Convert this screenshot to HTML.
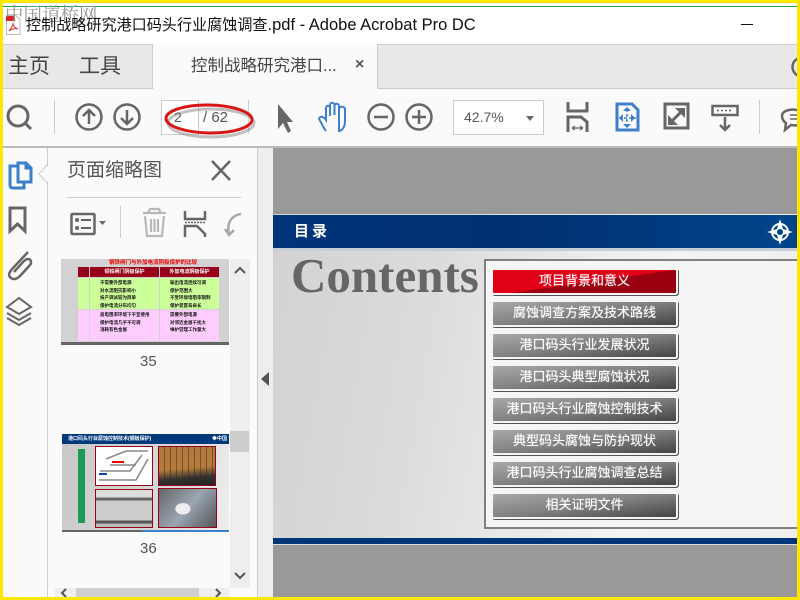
<!DOCTYPE html>
<html><head><meta charset="utf-8"><style>
html,body{margin:0;padding:0;width:800px;height:600px;overflow:hidden;background:#fff}
*{box-sizing:border-box}
body{font-family:"Liberation Sans","Noto Sans CJK SC",sans-serif;position:relative}
.a{position:absolute}
.t{position:absolute;white-space:nowrap;line-height:1}
.btn{position:absolute;left:491px;width:187px;height:27px;border:2px solid #f4f4f4;border-radius:3px;box-shadow:1px 1px 0 #555;background:linear-gradient(172deg,#a8a8a8 0%,#808080 50%,#444 100%);color:#fff;font-size:13px;text-align:center;line-height:22px;text-shadow:0 0 1px rgba(255,255,255,.6)}
.c{font-size:4.500px;line-height:7.700px;padding-left:10px;padding-top:1px;color:#111;font-weight:bold}
</style></head><body>
<div class="a" style="left:3px;top:6px;width:794px;height:1px;background:#1f9d5c"></div>
<svg class="a" style="left:5px;top:15px" width="16" height="20"><path d="M1.500 .5H11L15 4.500V19.500H1.500Z" fill="#fff" stroke="#bbb"/><rect x="1" y="1" width="9" height="5" fill="#d22"/><path d="M4 16C7 13 8 9 8 8C8 11 10 13 13 14C10 13 7 14 4 16Z" fill="none" stroke="#d33"/></svg>
<div class="t" style="left:5px;top:4px;font-size:18.500px;line-height:20px;color:#999;font-family:'Noto Serif CJK SC',serif">中国道桥网</div>
<div class="t" style="left:26px;top:17px;font-size:15.100px;color:#111">控制战略研究港口码头行业腐蚀调查<span style="font-size:16.500px">.pdf - Adobe Acrobat Pro DC</span></div>
<div class="a" style="left:741px;top:24px;width:12px;height:1px;background:#111"></div>
<div class="a" style="left:3px;top:44px;width:794px;height:45px;background:#e8e8e8;border-top:1px solid #ccc;border-bottom:1px solid #ccc"></div>
<div class="t" style="left:8px;top:56px;font-size:21px;color:#444">主页</div>
<div class="t" style="left:79px;top:56px;font-size:21px;color:#444">工具</div>
<div class="a" style="left:152px;top:44px;width:226px;height:45px;background:#fafafa;border:1px solid #ccc;border-bottom:none;border-top:none"></div>
<div class="t" style="left:191px;top:58px;font-size:16.500px;color:#444">控制战略研究港口...</div>
<div class="t" style="left:355px;top:57px;font-size:16px;font-weight:bold;color:#555">×</div>
<svg class="a" style="left:780px;top:55px" width="17" height="24" fill="none" stroke="#666" stroke-width="2.500"><circle cx="22" cy="12" r="9.500"/></svg>
<div class="a" style="left:3px;top:89px;width:794px;height:57px;background:#fafafa"></div>
<div class="a" style="left:3px;top:146px;width:794px;height:2px;background:#bbb"></div>
<svg class="a" style="left:0;top:89px" width="800" height="58" fill="none" stroke="#666" stroke-width="2.500">
<circle cx="18" cy="27" r="10" stroke-width="3"/><path d="M25 34L31 40" stroke-width="3"/>
<path d="M54.500 11V45M248.500 11V45M759.500 11V45" stroke="#ccc" stroke-width="1"/>
<circle cx="89" cy="28" r="12.500"/><path d="M89 35V21M83 27L89 21L95 27"/>
<circle cx="127" cy="28" r="12.500"/><path d="M127 21V35M121 29L127 35L133 29"/>
<path d="M278 15V40L283 34L288 44L291 42L287 33H293Z" fill="#666" stroke="none"/>
<path d="M326 42C323 38 321 33 319 30C320 26 324 28 326 31V19C326 16 330 16 330 19V27M330 26V16C330 13 334.500 13 334.500 16V26M334.500 26V17C334.500 14 339 14 339 17V27M339 27V20C339 17 345 17 345 20V32C345 38 342 42 339 42Z" stroke="#3d7fcb" stroke-width="2"/>
<circle cx="381" cy="28" r="12.500"/><path d="M374 28H388"/>
<circle cx="419" cy="28" r="12.500"/><path d="M412 28H426M419 21V35"/>
<path d="M568 13V22H587V13M568 43V28H581L587 33V43" stroke-width="3"/><path d="M572 39H583M572 39L575 37M572 39L575 41M583 39L580 37M583 39L580 41" stroke-width="1.200"/>
<path d="M617 15H632L638 21V41H617Z" stroke="#3d7fcb" stroke-width="3"/><path d="M627 20V37M619 29H636" stroke="#3d7fcb" stroke-width="1.500" stroke-dasharray="3 2"/><path d="M627 18L631 22H623ZM627 39L631 35H623ZM619 29L623 25V33ZM635 29L631 25V33Z" fill="#3d7fcb" stroke="none"/>
<rect x="665" y="15" width="23" height="24" stroke-width="3"/><path d="M671 33L682 22" stroke-width="3"/><path d="M675 19H685V29ZM668 26V36H678Z" fill="#666" stroke="none"/>
<rect x="712.500" y="17" width="25" height="9" stroke-width="2.500"/><path d="M725 28V41M720 36L725 41L730 36"/>
<path d="M717 21.500h2m2 0h2m2 0h2m2 0h2" stroke-width="1.500"/>
<path d="M782 27C782 18 806 18 806 30C806 36 796 37 791 36L785 41L786 34C784 33 782 30 782 27Z"/><path d="M790 26H800M790 30H800" stroke-width="1.500"/>
</svg>
<div class="a" style="left:161px;top:100px;width:38px;height:35px;background:#fff;border:1px solid #ccc"></div>
<div class="t" style="left:174px;top:110px;font-size:14px;color:#555">2</div>
<div class="t" style="left:203px;top:110px;font-size:15px;color:#555">/ 62</div>
<div class="a" style="left:453px;top:100px;width:91px;height:35px;background:#fff;border:1px solid #ccc"></div>
<div class="t" style="left:464px;top:110px;font-size:14px;color:#555">42.7%</div>
<div class="a" style="left:526px;top:116px;border:4px solid transparent;border-top:5px solid #666"></div>
<svg class="a" style="left:155px;top:98px" width="105" height="44"><ellipse cx="54" cy="23" rx="43" ry="14" fill="none" stroke="#777" stroke-width="3" opacity=".45" transform="translate(2 2)"/><ellipse cx="54" cy="21" rx="43" ry="14" fill="none" stroke="#d81616" stroke-width="3" transform="rotate(1 54 21)"/></svg>
<div class="a" style="left:3px;top:148px;width:254px;height:449px;background:#fafafa"></div>
<div class="a" style="left:47px;top:148px;width:1px;height:449px;background:#ccc"></div>
<div class="a" style="left:257px;top:148px;width:1px;height:449px;background:#ccc"></div>
<svg class="a" style="left:0;top:148px" width="80" height="190" fill="none" stroke="#666" stroke-width="2.500">
<path d="M18 18H10V37C10 39 11 40 13 40H24V33" stroke="#3d7fcb" stroke-width="3"/><path d="M18 15V34H31V20L26 15ZM26 15V20H31" stroke="#3d7fcb" stroke-width="3"/>
<path d="M47 17L39 26L47 35" stroke="#ccc" stroke-width="1"/><path d="M48 18L40 26L48 34Z" fill="#fafafa" stroke="none"/>
<path d="M10 60H25V83L17.500 76L10 83Z" stroke-width="3"/>
<path d="M28 104L14 119C10 123 7 127 11 130C15 133 19 129 21 127L30 117C32 115 31 111 28 111C26 111 25 112 23 114L14 124" stroke-width="2.500"/>
<path d="M19 150L7 159L19 166L31 159ZM7 165L19 172L31 165M7 170L19 177L31 170" stroke-width="2"/>
</svg>
<div class="t" style="left:67px;top:161px;font-size:19px;color:#555">页面缩略图</div>
<svg class="a" style="left:60px;top:155px" width="190" height="90" fill="none" stroke="#666" stroke-width="2.500">
<path d="M152 6L170 25M170 6L152 25"/>
<path d="M7 42.500H181" stroke="#ccc" stroke-width="1"/>
<path d="M7 97.500H181" stroke="#ccc" stroke-width="1"/>
<path d="M60.500 51V83" stroke="#ccc" stroke-width="1"/>
<rect x="11.500" y="59" width="23" height="20" rx="1" stroke-width="2.500"/>
<circle cx="17" cy="65" r="2" fill="#666" stroke="none"/><circle cx="17" cy="73" r="2" fill="#666" stroke="none"/><path d="M21 65H31M21 73H31" stroke-width="2"/>
<path d="M39 66H46L42.500 70Z" fill="#666" stroke="none"/>
<path d="M83 58H106M88 58L90 54H99L101 58M85 61L87 81H102L104 61M91 64V77M94.500 64V77M98 64V77" stroke="#b8b8b8" stroke-width="2.200"/>
<path d="M125 56V64H145V56M125 82V71H137L145 79V82" stroke-width="2.500"/>
<path d="M125 67.500H145" stroke-width="1.500" stroke-dasharray="2 1"/>
<path d="M181 59C172 60 166 68 169 79M165 74L169 80L174 75" stroke="#aaa" stroke-width="2.500"/>
</svg>
<div class="a" style="left:61px;top:259px;width:168px;height:86px;background:#c8c8c8;border-bottom:3px solid #666;overflow:hidden">
<div class="a" style="left:0;top:0;width:168px;height:84px;background:#d2d2d2"></div>
<div class="t" style="left:48px;top:1.500px;font-size:5.500px;font-weight:bold;color:#e00">钢铁闸门与外加电流阴极保护的比较</div>
<div class="a" style="left:17px;top:8px;width:11px;height:10px;background:#970018"></div>
<div class="a" style="left:29px;top:8px;width:69px;height:10px;background:#970018;color:#fff;font-size:5px;line-height:10px;text-align:center;font-weight:bold">铜铁闸门阴极保护</div>
<div class="a" style="left:99px;top:8px;width:59px;height:10px;background:#970018;color:#fff;font-size:5px;line-height:10px;text-align:center;font-weight:bold">外加电流阴极保护</div>
<div class="a" style="left:17px;top:19px;width:11px;height:31px;background:#ccff99"></div>
<div class="a c" style="left:29px;top:19px;width:69px;height:31px;background:#ccff99">不需要外部电源<br>对水流阻抗影响小<br>投产调试较为简单<br>保护电流分布均匀</div>
<div class="a c" style="left:99px;top:19px;width:59px;height:31px;background:#ccff99">输出电流连续可调<br>保护范围大<br>不受环境电阻率限制<br>保护装置寿命长</div>
<div class="a" style="left:17px;top:51px;width:11px;height:31px;background:#ffccff"></div>
<div class="a c" style="left:29px;top:51px;width:69px;height:31px;background:#ffccff">高电阻率环境下不宜使用<br>保护电流几乎不可调<br>消耗有色金属</div>
<div class="a c" style="left:99px;top:51px;width:59px;height:31px;background:#ffccff">需要外部电源<br>对邻近金属干扰大<br>维护管理工作量大</div>
</div>
<div class="t" style="left:140px;top:354px;font-size:15px;color:#555">35</div>
<div class="a" style="left:62px;top:434px;width:167px;height:98px;background:linear-gradient(100deg,#c8c8c8,#dcdcdc 70%,#eee);overflow:hidden">
<div class="a" style="left:0;top:0;width:167px;height:10px;background:#003a7d"></div>
<div class="t" style="left:6px;top:2.500px;font-size:5px;font-weight:bold;color:#fff">港口码头行业腐蚀控制技术(钢板保护)</div>
<div class="t" style="left:150px;top:2.500px;font-size:5px;font-weight:bold;color:#fff">◆中国</div>
<div class="a" style="left:16px;top:15px;width:7px;height:74px;background:#1a9a58"></div>
<div class="a" style="left:33px;top:12px;width:58px;height:40px;background:#fff;border:1px solid #970018">
<svg width="56" height="38" fill="none" stroke="#888"><path d="M3 33H40L52 12M10 12L30 4H52M4 24H34L46 8M14 18H40" stroke-width="1.500"/><path d="M16 14h12v2H16z" fill="#e00" stroke="none"/><path d="M3 26h8v2H3z" fill="#1144aa" stroke="none"/></svg></div>
<div class="a" style="left:96px;top:12px;width:58px;height:40px;background:repeating-linear-gradient(90deg,transparent 0 5px,rgba(60,40,20,.5) 5px 6px),linear-gradient(175deg,#b07a40,#b57b3c 55%,#333 78%,#222 100%);border:1px solid #970018"></div>
<div class="a" style="left:33px;top:55px;width:58px;height:39px;background:linear-gradient(180deg,#ddd 0 20%,#666 20% 28%,#ccc 28% 82%,#555 82% 90%,#bbb 90%);border:1px solid #970018"></div>
<div class="a" style="left:96px;top:54px;width:59px;height:40px;background:radial-gradient(ellipse 8px 6px at 42% 52%,#eee 90%,transparent),linear-gradient(130deg,#666,#9aa6b4 50%,#555);border:1px solid #970018"></div>
</div>
<div class="a" style="left:62px;top:530px;width:167px;height:2px;background:linear-gradient(90deg,#666 48%,#3d7fcb 48%)"></div>
<div class="t" style="left:140px;top:541px;font-size:15px;color:#555">36</div>
<div class="a" style="left:230px;top:259px;width:20px;height:329px;background:#eee"></div>
<div class="a" style="left:230px;top:431px;width:19px;height:21px;background:#ccc"></div>
<svg class="a" style="left:230px;top:259px" width="20" height="330" fill="none" stroke="#555" stroke-width="2"><path d="M5 14L10 9L15 14M5 314L10 319L15 314"/></svg>
<div class="a" style="left:55px;top:588px;width:174px;height:9px;background:#eee"></div>
<div class="a" style="left:76px;top:588px;width:123px;height:9px;background:#d0d0d0"></div>
<svg class="a" style="left:55px;top:588px" width="174" height="9" fill="none" stroke="#555" stroke-width="2"><path d="M11 1L7 5L11 9M161 1L165 5L161 9"/></svg>
<div class="a" style="left:258px;top:148px;width:15px;height:449px;background:#eee"></div>
<div class="a" style="left:261px;top:372px;border:7px solid transparent;border-right:8px solid #555;border-left:0"></div>
<div class="a" style="left:273px;top:148px;width:524px;height:449px;background:#999"></div>
<div class="a" style="left:273px;top:214px;width:524px;height:331px;background:linear-gradient(100deg,#d2d2d2 0%,#dcdcdc 30%,#f4f4f4 70%,#eee 100%)"></div>
<div class="a" style="left:273px;top:215px;width:524px;height:33px;background:linear-gradient(90deg,#00357a 0%,#003070 45%,#00458c 100%)"></div>
<div class="a" style="left:273px;top:248px;width:524px;height:3px;background:#c8ccd8"></div>
<div class="t" style="left:294px;top:224px;font-size:15px;font-weight:bold;color:#fff;letter-spacing:3px">目录</div>
<svg class="a" style="left:767px;top:218px" width="30" height="28" fill="none" stroke="#fff"><circle cx="13" cy="14" r="8" stroke-width="2"/><path d="M13 1L16 11L26 14L16 17L13 27L10 17L0 14L10 11Z" fill="#fff" stroke="none"/><circle cx="13" cy="14" r="3" fill="#00458c" stroke="none"/></svg>
<div class="t" style="left:291px;top:251px;font-family:'Liberation Serif',serif;font-size:49px;font-weight:bold;color:#666">Contents</div>
<div class="a" style="left:484px;top:259px;width:313px;height:270px;background:#f5f5f5;border:2px solid #808080;border-right:none"></div>
<div class="btn" style="top:268px;background:linear-gradient(172deg,#e00018 0%,#e00018 52%,#9a0010 53%,#9a0010 100%)">项目背景和意义</div>
<div class="btn" style="top:300px">腐蚀调查方案及技术路线</div>
<div class="btn" style="top:332px">港口码头行业发展状况</div>
<div class="btn" style="top:364px">港口码头典型腐蚀状况</div>
<div class="btn" style="top:396px">港口码头行业腐蚀控制技术</div>
<div class="btn" style="top:428px">典型码头腐蚀与防护现状</div>
<div class="btn" style="top:460px">港口码头行业腐蚀调查总结</div>
<div class="btn" style="top:492px">相关证明文件</div>
<div class="a" style="left:273px;top:538px;width:524px;height:6px;background:#00357a"></div>
<div class="a" style="left:273px;top:544px;width:524px;height:1px;background:#ddd"></div>
<div class="a" style="left:0;top:0;width:800px;height:3px;background:#ffe600"></div>
<div class="a" style="left:0;top:597px;width:800px;height:3px;background:#ffe600"></div>
<div class="a" style="left:0;top:0;width:3px;height:600px;background:#ffe600"></div>
<div class="a" style="left:797px;top:0;width:3px;height:600px;background:#ffe600"></div>
</body></html>
